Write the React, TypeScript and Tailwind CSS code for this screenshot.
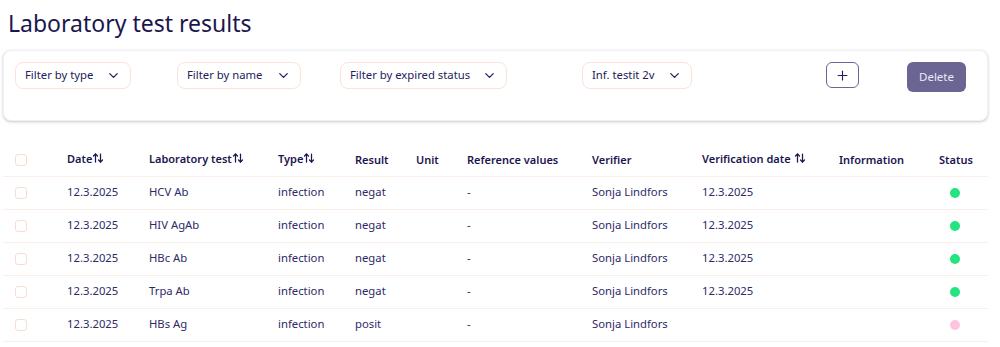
import React from "react";
import { ChevronDown, ArrowUpDown, Plus } from "lucide-react";

const rows = [
  { date: "12.3.2025", test: "HCV Ab", type: "infection", result: "negat", ref: "-", verifier: "Sonja Lindfors", vdate: "12.3.2025", ok: true },
  { date: "12.3.2025", test: "HIV AgAb", type: "infection", result: "negat", ref: "-", verifier: "Sonja Lindfors", vdate: "12.3.2025", ok: true },
  { date: "12.3.2025", test: "HBc Ab", type: "infection", result: "negat", ref: "-", verifier: "Sonja Lindfors", vdate: "12.3.2025", ok: true },
  { date: "12.3.2025", test: "Trpa Ab", type: "infection", result: "negat", ref: "-", verifier: "Sonja Lindfors", vdate: "12.3.2025", ok: true },
  { date: "12.3.2025", test: "HBs Ag", type: "infection", result: "posit", ref: "-", verifier: "Sonja Lindfors", vdate: "", ok: false },
];

function Filter({ label, w, className = "" }: { label: string; w: string; className?: string }) {
  return (
    <div
      className={`flex h-[27px] items-center justify-between rounded-lg border border-[#fbe3da] bg-white pl-[9px] pr-[9px] text-[11.3px] text-[#221d5c] ${w} ${className}`}
    >
      <span>{label}</span>
      <ChevronDown size={15} strokeWidth={2} className="text-[#221d5c]" />
    </div>
  );
}

function Sort() {
  return <ArrowUpDown size={12} strokeWidth={2.5} className="mb-[4px] inline-block text-[#1c1650]" />;
}

function Box() {
  return <div className="h-[12px] w-[12px] rounded-[3px] border border-[#fbdccf] bg-white" />;
}

export default function App() {
  return (
    <div className="min-h-[347px] bg-white text-[#1c1650]" style={{ fontFamily: '"Noto Sans", "Open Sans", sans-serif' }}>
      <h1 className="pl-[8px] pt-[5px] text-[23px] leading-[36px] text-[#1c1650]">Laboratory test results</h1>
      <div className="mx-[3px] mt-[9px] h-[71px] w-[985px] rounded-lg border border-[#f0eff3] bg-white px-[11px] pt-[11px] shadow-[0_1px_3px_rgba(0,0,0,0.22)]">
        <div className="flex items-start">
          <Filter label="Filter by type" w="w-[116px]" />
          <Filter label="Filter by name" w="w-[124px]" className="ml-[46px]" />
          <Filter label="Filter by expired status" w="w-[167px]" className="ml-[39px]" />
          <Filter label="Inf. testit 2v" w="w-[110px]" className="ml-[75px]" />
          <button className="ml-[134px] flex h-[26px] w-[33px] items-center justify-center rounded-md border border-[#6b6594] bg-white">
            <Plus size={15} strokeWidth={1.8} className="text-[#221d5c]" />
          </button>
          <button className="ml-[48px] h-[30px] w-[59px] rounded-md bg-[#6b6594] text-[11.5px] text-[#ebe9f3]">Delete</button>
        </div>
      </div>
      <table className="mx-[3px] mt-[23px] w-[985px] table-fixed border-collapse text-[11.3px]">
        <colgroup>
          <col className="w-[52px]" />
          <col className="w-[82px]" />
          <col className="w-[129px]" />
          <col className="w-[77px]" />
          <col className="w-[61px]" />
          <col className="w-[51px]" />
          <col className="w-[125px]" />
          <col className="w-[110px]" />
          <col className="w-[137px]" />
          <col className="w-[100px]" />
          <col className="w-[61px]" />
        </colgroup>
        <thead>
          <tr className="h-[32px] border-b border-[#fcefe9] text-left text-[11px] text-[#1c1650]">
            <th className="pl-[12px] font-semibold"><Box /></th>
            <th className="pl-[12px] font-semibold whitespace-nowrap">Date<Sort /></th>
            <th className="pl-[12px] font-semibold whitespace-nowrap">Laboratory test<Sort /></th>
            <th className="pl-[12px] font-semibold whitespace-nowrap">Type<Sort /></th>
            <th className="pl-[12px] font-semibold">Result</th>
            <th className="pl-[12px] font-semibold">Unit</th>
            <th className="pl-[12px] font-semibold whitespace-nowrap">Reference values</th>
            <th className="pl-[12px] font-semibold">Verifier</th>
            <th className="pl-[12px] font-semibold whitespace-nowrap">Verification date <Sort /></th>
            <th className="pl-[12px] font-semibold">Information</th>
            <th className="pl-[12px] font-semibold">Status</th>
          </tr>
        </thead>
        <tbody>
          {rows.map((r, i) => (
            <tr key={i} className="h-[33px] border-b border-[#fcefe9] text-[#2f2a66]">
              <td className="pl-[12px]"><Box /></td>
              <td className="pl-[12px]">{r.date}</td>
              <td className="pl-[12px]">{r.test}</td>
              <td className="pl-[12px]">{r.type}</td>
              <td className="pl-[12px]">{r.result}</td>
              <td className="pl-[12px]"></td>
              <td className="pl-[12px]">{r.ref}</td>
              <td className="pl-[12px]">{r.verifier}</td>
              <td className="pl-[12px]">{r.vdate}</td>
              <td className="pl-[12px]"></td>
              <td className="pl-[23px]">
                <div className={`h-[10px] w-[10px] rounded-full ${r.ok ? "bg-[#22e57f]" : "bg-[#fbc4df]"}`} />
              </td>
            </tr>
          ))}
        </tbody>
      </table>
    </div>
  );
}
